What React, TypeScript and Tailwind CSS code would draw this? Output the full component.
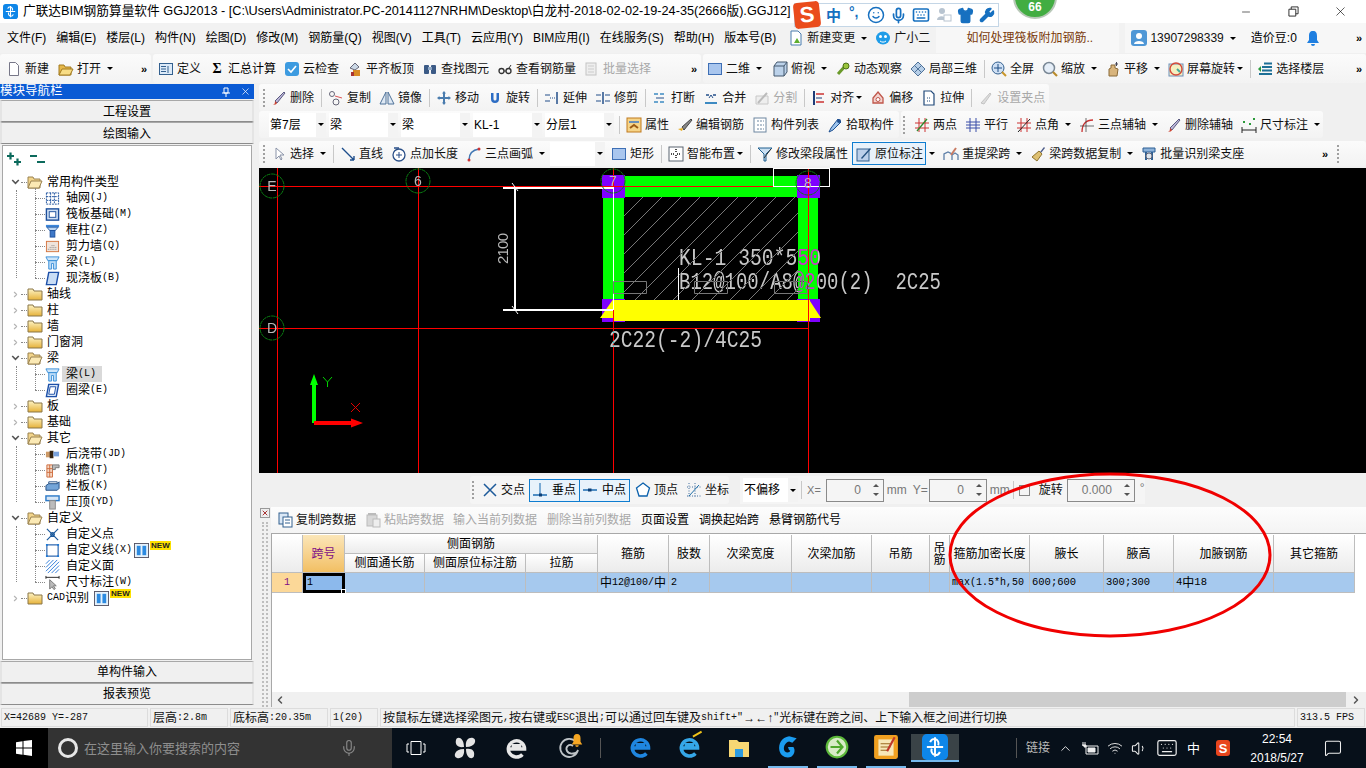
import React from "react";
import { ChevronLeft, ChevronRight, ChevronUp, Keyboard, MessageSquare, Mic, Minus, Shirt, Smile, Volume1, Wifi, Wrench, X } from "lucide-react";

const Svg = ({ children, s = 16 }: { children: React.ReactNode; s?: number }) => (
  <svg viewBox="0 0 16 16" width={s} height={s} className="shrink-0">
    {children}
  </svg>
);

const Logo = ({ s = 14 }: { s?: number }) => (
  <Svg s={s}>
    <rect width="16" height="16" rx="3" fill="#0e86e8" />
    <path d="M8 2v12M3 8h10M5 5a3 3 0 0 1 3-2 3 3 0 0 1 2 4M11 11a3 3 0 0 1-3 2 3 3 0 0 1-2-4" stroke="#fff" strokeWidth="1.2" fill="none" />
  </Svg>
);

const icons: Record<string, React.ReactNode> = {
  doc: <path d="M3.5 1.5h6l3 3v10h-9z" fill="#fff" stroke="#778" />,
  open: <><path d="M1 14V4h5l1 2h6v8z" fill="#e6b84a" stroke="#a27a20" /><path d="M1 14l3-6h11l-3 6z" fill="#f8dd86" stroke="#a27a20" /></>,
  define: <><rect x="1.5" y="2.5" width="13" height="11" fill="#dceaf8" stroke="#33608f" /><path d="M3 5.5h5M3 8h5M3 10.5h5M10 5v7" stroke="#33608f" /></>,
  cloud: <><rect x="1" y="1" width="14" height="14" rx="3" fill="#3d9be0" /><path d="M4 8l3 3 5-6" stroke="#fff" strokeWidth="1.6" fill="none" /></>,
  level: <><path d="M3 7l5-5 4 4-4 3z" fill="#cbd8e6" stroke="#667" /><rect x="6" y="9" width="7" height="6" fill="#d98a24" /><rect x="4" y="11" width="3" height="4" fill="#a33" /></>,
  find: <><rect x="2" y="4" width="5" height="9" rx="1" fill="#3b5a86" /><rect x="9" y="4" width="5" height="9" rx="1" fill="#3b5a86" /><rect x="6" y="6" width="4" height="3" fill="#8fa8c6" /></>,
  glasses: <><circle cx="4.5" cy="10" r="2.5" fill="none" stroke="#333" strokeWidth="1.3" /><circle cx="11.5" cy="10" r="2.5" fill="none" stroke="#333" strokeWidth="1.3" /><path d="M7 10h2M12 7l2-3" stroke="#333" /></>,
  batch: <><rect x="2" y="2" width="10" height="12" fill="#eee" stroke="#c4c4c4" /><path d="M4 5h6M4 8h6M4 11h6" stroke="#ccc" /></>,
  square: <rect x="1.5" y="2.5" width="13" height="11" fill="#a9c6ee" stroke="#3e6fb5" />,
  cube: <><path d="M5 1h10v10l-3 4H2V5z" fill="#bcd2ea" stroke="#44586e" /><path d="M2 5h10v10M12 5l3-4" stroke="#44586e" fill="none" /></>,
  orbit: <><path d="M3 13L12 3" stroke="#6a9a2a" strokeWidth="3" /><circle cx="11" cy="5" r="3" fill="#9ac53c" stroke="#4d701a" /></>,
  local: <><path d="M8 1l7 7-7 7-7-7z" fill="#b7cfe8" stroke="#4f7299" /><path d="M4 4l8 8M12 4l-8 8" stroke="#4f7299" /></>,
  full: <><circle cx="7" cy="7" r="6" fill="#cfe0f4" stroke="#33608f" /><path d="M7 3v8M3 7h8" stroke="#1f4f85" /><path d="M11 11l4 4" stroke="#c9962a" strokeWidth="2" /></>,
  zoom: <><circle cx="7" cy="7" r="5.5" fill="#e5eef8" stroke="#7a8896" strokeWidth="1.5" /><path d="M11 11l4 4" stroke="#b98a2a" strokeWidth="2.2" /></>,
  hand: <><path d="M4 15V8l2-1V4h4v3l3 1-1 7z" fill="#d8b47c" stroke="#8a6a38" /><path d="M10 3h3M11.500 1v4" stroke="#445" /></>,
  screen: <><rect x="1" y="3" width="14" height="12" fill="#f5efc0" stroke="#6c8fbc" /><circle cx="8" cy="8" r="6" fill="none" stroke="#d54a3a" strokeWidth="1.4" /><path d="M9 8l3 3" stroke="#4a9" strokeWidth="2" /></>,
  floors: <><path d="M2 13h13M5 9.500h10M5 6h10M7 2.500h8" stroke="#1d6f96" strokeWidth="2" /><path d="M1 8l3-3v6z" fill="#2a9a3a" /></>,
  brush: <><path d="M4 11l9-9 1 1-8 10z" fill="#bcb6d8" stroke="#5a5a80" /><path d="M1 15c2 0 3-1 3-4l2 2c0 1-2 2-5 2z" fill="#c43" /></>,
  copy: <><circle cx="4" cy="4" r="2.500" fill="none" stroke="#667" /><circle cx="8" cy="12" r="3" fill="none" stroke="#667" /><path d="M7 6l7 2" stroke="#d55" /></>,
  mirror: <><path d="M7 2v12H1zM9 2v12h6z" fill="#dfe9f4" stroke="#4f7299" /></>,
  move: <path d="M8 1l2 2.500H9V7h3.500V6L15 8l-2.500 2V9H9v3.500h1L8 15l-2-2.500h1V9H3.500v1L1 8l2.500-2v1H7V3.500H6z" fill="#4a7cae" />,
  rotate: <path d="M4 3v6a4 4 0 0 0 8 0V3h-2.500v6a1.500 1.500 0 0 1-3 0V3z" fill="#2d6dc4" />,
  extend: <><path d="M13 2v12" stroke="#234f8a" strokeWidth="1.500" /><path d="M1 5h5M1 11h5" stroke="#234f8a" /><path d="M6 8h5" stroke="#234f8a" strokeDasharray="1 1" /></>,
  trim: <><path d="M8 2v12" stroke="#234f8a" strokeWidth="1.500" /><path d="M1 5h5M1 11h5M10 5h5M10 11h5" stroke="#234f8a" /></>,
  breakL: <><path d="M2 4h12M2 12h12" stroke="#3d8ac2" strokeWidth="1.500" strokeDasharray="4 2" /><path d="M4 8h8" stroke="#234f8a" /></>,
  merge: <><path d="M2 13h12" stroke="#3d8ac2" strokeWidth="2" /><path d="M3 5h3M10 5h3" stroke="#234f8a" strokeWidth="1.500" /><path d="M6 8l2-3 2 3" stroke="#234f8a" fill="none" /></>,
  split: <><path d="M2 6h12v8H2z" fill="#eee" stroke="#c8c8c8" /><path d="M4 13L13 3" stroke="#bbb" strokeWidth="2" /></>,
  align: <><path d="M3 1v14" stroke="#1e3c78" strokeWidth="2" /><path d="M5 4h8M5 12h8" stroke="#c33" strokeWidth="1.500" /><path d="M5 8h6" stroke="#1e3c78" /></>,
  offset: <><path d="M8 2l5 6v5H3V8z" fill="#f2d3cf" stroke="#c0564a" strokeWidth="1.300" /><circle cx="8" cy="9.500" r="2" fill="#fff" stroke="#c0564a" /></>,
  stretch: <><path d="M3 1h7l3 3v11H3z" fill="#fff" stroke="#224a7a" strokeWidth="1.200" /><path d="M6 8h4M6 11h4" stroke="#224a7a" strokeDasharray="1 1" /></>,
  grip: <path d="M3 13l9-10 1 1-7 10z" fill="#ddd" stroke="#c4c4c4" />,
  attr: <><rect x="1" y="1" width="14" height="14" fill="#f6d488" stroke="#c07a1f" /><path d="M3 5h10" stroke="#6a8fb8" strokeWidth="2" /><path d="M4 11l4-3 4 3" stroke="#9b5a14" strokeWidth="2" fill="none" /></>,
  edit: <><path d="M5 10l9-8 1 1-8 10z" fill="#888" stroke="#444" /><path d="M1 12l5-1-1 3z" fill="#e4a91c" /></>,
  list: <><rect x="2" y="1" width="12" height="14" fill="#fff" stroke="#6c86a0" /><path d="M5 4h7M5 8h7M5 12h7" stroke="#6c86a0" strokeDasharray="2 1" /></>,
  picker: <><path d="M11 2l3 3-8 8-4 2 2-4z" fill="#9cc4ee" stroke="#1e4f90" /><circle cx="12" cy="4" r="2" fill="#1e4f90" /></>,
  twoPt: <><path d="M1 6h14M1 11h14" stroke="#c33" /><path d="M5 1v14M11 1v14" stroke="#c33" /><path d="M3 14L13 2" stroke="#2e8b2e" strokeWidth="1.300" /></>,
  parallel: <path d="M1 5h14M1 8h14M1 11h14M5 1v14M11 1v14" stroke="#3a4fa8" />,
  angle: <><path d="M1 6h14M1 11h14M5 1v14M11 1v14" stroke="#c33" /><path d="M2 15L14 2" stroke="#222" /></>,
  arc3: <><path d="M3 15C3 7 7 3 14 3" stroke="#c33" strokeWidth="1.300" fill="none" /><path d="M1 9h14M7 1v14" stroke="#333" strokeWidth=".7" /></>,
  dims: <><path d="M1 13h14M1 10v6M15 10v6" stroke="#222" /><rect x="2" y="4" width="2" height="2" fill="#2a9a3a" /><rect x="12" y="1" width="2" height="2" fill="#2a9a3a" /><rect x="8" y="6" width="2" height="2" fill="#2a9a3a" /></>,
  select: <path d="M5 2v11l3-3 2 4 1-1-2-4h4z" fill="#fff" stroke="#8a93a8" />,
  lineT: <path d="M2 2l12 12M14 14v-4M14 14h-4" stroke="#1d4d8c" strokeWidth="1.400" fill="none" />,
  addLen: <><circle cx="8" cy="9" r="6" fill="#fff" stroke="#2a4f88" strokeWidth="1.300" /><path d="M8 6v6M5 9h6" stroke="#2a4f88" /><path d="M3 2h5" stroke="#2a4f88" strokeWidth="1.500" /></>,
  arc: <><path d="M3 14C3 8 6 4 13 3" stroke="#4277b4" strokeWidth="1.500" fill="none" /><circle cx="3" cy="14" r="1.500" fill="#c33" /><circle cx="13" cy="3" r="1.500" fill="#c33" /></>,
  smart: <><rect x="1" y="1" width="14" height="14" fill="#fff" stroke="#5a6470" /><path d="M8 3v4M8 9v4M3 8h4M9 8h4" stroke="#111" strokeDasharray="1 1" strokeWidth="1.500" /></>,
  modify: <><path d="M1 2h14l-6 6v7H7V8z" fill="#cbe0f2" stroke="#1e5e8e" /><path d="M7 12l7-9" stroke="#333" /></>,
  mark: <><rect x="1" y="3" width="12" height="12" fill="#bcd0ea" stroke="#33608f" /><path d="M5 12l9-10 1 1-9 10z" fill="#24507f" /></>,
  lift: <><path d="M1 14V8l4-2 4 2v6M9 14V9l3-2 3 2v5" stroke="#5d7fa8" strokeWidth="1.300" fill="none" /><path d="M8 9l5-7" stroke="#c97b63" strokeWidth="2" /></>,
  broom: <><path d="M10 6l4-5 1 1-4 5z" fill="#4d5c88" /><path d="M2 11l7-6 3 3-5 7z" fill="#dec071" stroke="#8f7430" /></>,
  scan: <><path d="M2 2h12v4H2z" fill="#8db2d9" stroke="#2c5f94" /><path d="M5 6v8M11 6v8" stroke="#2c5f94" strokeWidth="2" /><circle cx="8" cy="10" r="3" fill="#dde6ee" stroke="#667" /></>,
  cross: <path d="M2 2l12 12M14 2L2 14" stroke="#1d5a9a" strokeWidth="1.500" />,
  perp: <><path d="M1 13h14" stroke="#0d62ad" strokeWidth="1.400" /><path d="M8 1v12" stroke="#0d62ad" /><rect x="7" y="11.500" width="3" height="3" fill="#0d3f76" /></>,
  mid: <><path d="M1 8h14" stroke="#0d62ad" strokeWidth="1.400" /><rect x="6" y="6.500" width="3.500" height="3" fill="#0d3f76" /></>,
  top: <path d="M8 1l6.500 5-2.500 8H4L1.500 6z" fill="#fff" stroke="#0d62ad" strokeWidth="1.300" />,
  coord: <><path d="M1 14h14M3 1v14M9 1v14M1 5h14" stroke="#4570a0" strokeDasharray="1 1.500" /><path d="M3 14L13 3" stroke="#1f6fa8" /></>,
  pasteG: <><rect x="3" y="1" width="8" height="3" fill="#bbb" /><rect x="2" y="3" width="10" height="11" fill="#d8d8d8" stroke="#bbb" /><rect x="8" y="7" width="7" height="8" fill="#eee" stroke="#bbb" /></>,
  copyP: <><rect x="2" y="1" width="9" height="11" fill="#dbe8f6" stroke="#33608f" /><rect x="6" y="5" width="9" height="10" fill="#fff" stroke="#33608f" /><path d="M8 8h5M8 11h5" stroke="#33608f" /></>,
  folderDoc: <><path d="M3 1h7l3 3v11H3z" fill="#fff" stroke="#4a7cae" /><path d="M6 13l3-5 3 5z" fill="#5fae2e" /></>,
  gxe: <><ellipse cx="8" cy="8" rx="7" ry="6.500" fill="#1e9ce8" /><circle cx="5.500" cy="6.500" r="1.500" fill="#fff" /><circle cx="10.500" cy="6.500" r="1.500" fill="#fff" /><path d="M5 11c2 1.500 4 1.500 6 0" stroke="#fff" fill="none" /></>,
  user: <><rect x="0" y="0" width="16" height="16" rx="3" fill="#4f97d6" /><circle cx="8" cy="6" r="3" fill="#fff" /><path d="M3 14c0-4 10-4 10 0z" fill="#fff" /></>,
  bell: <path d="M8 1c3 0 4 2 4 5v4l2 3H2l2-3V6c0-3 1-5 4-5zM6 14h4a2 2 0 0 1-4 0z" fill="#1f7fe0" />,
  gridT: <path d="M1.500 2h13v12h-13zM1.500 6h13M1.500 10h13M6 2v12M10 2v12" stroke="#1c4f9c" fill="#fff" strokeDasharray="2 1" />,
  raft: <><rect x="1.500" y="2" width="13" height="12" fill="#cfe0f4" stroke="#1c4f9c" strokeWidth="1.500" /><rect x="4.500" y="5" width="7" height="6" fill="#fff" stroke="#1c4f9c" /></>,
  col: <><path d="M1 2h14v2.500H1z" fill="#3d86d8" /><path d="M2 4.500h12L11 8H5z" fill="#bcd6f2" stroke="#2a5fa8" /><rect x="5.500" y="8" width="5" height="7" fill="#3d78c8" stroke="#1c4f9c" /></>,
  wall: <><rect x="1.500" y="2.500" width="13" height="11" fill="#efe4dc" stroke="#d4753f" /><path d="M3 11h10M5 9h7M7 7h4" stroke="#888" strokeDasharray="1 1" /></>,
  beam: <><path d="M1 2h14l-2 4H3z" fill="#cfe6fa" stroke="#3a8fd8" /><path d="M4 6h8v9H9V9H7v6H4z" fill="#bcdcf8" stroke="#3a8fd8" /></>,
  slab: <path d="M4 1.500h10.500L12 14.500H1.500z" fill="#c9ddf5" stroke="#1c4fa8" strokeWidth="1.500" />,
  ring: <><path d="M4 1.500h10.500L12 14.500H1.500z" fill="#d7e6f7" stroke="#1c4fa8" strokeWidth="1.500" /><path d="M5.500 4h6L10 12H4z" fill="#fff" stroke="#1c4fa8" /></>,
  post: <><path d="M1 5h7v6H1z" fill="#c96" /><path d="M5 4h4v8H5z" fill="#321" /><path d="M9 5h6v5H9z" fill="#7aa2dc" /></>,
  eave: <><path d="M2 2h6v13H2z" fill="#f4d7c3" stroke="#cf6d3e" /><path d="M8 2h7v3h-4v2H8z" fill="#bbb" stroke="#777" /><path d="M2 6h6M2 10h6M5 2v13" stroke="#cf6d3e" /></>,
  rail: <><path d="M1 7l3-2h9l2-2v7l-2 2H1z" fill="#74a5d8" stroke="#224f84" /><path d="M4 5V3h9v2" fill="none" stroke="#224f84" /></>,
  press: <><rect x="1" y="1" width="14" height="5" fill="#d7e6f5" stroke="#2c7ac8" strokeWidth="1.500" /><rect x="5" y="6" width="6" height="9" fill="#bbb" stroke="#888" /></>,
  defPt: <path d="M2 2l12 12M14 2L2 14M6 8a2 2 0 1 0 4 0 2 2 0 1 0-4 0" stroke="#1c5a9c" strokeWidth="1.300" fill="#fff" />,
  defLn: <><rect x="2" y="2" width="12" height="12" fill="#fff" stroke="#1c5aa8" strokeWidth="1.200" /><path d="M1 1h2v2H1zM13 1h2v2h-2zM1 13h2v2H1zM13 13h2v2h-2z" fill="#1c7ad8" /></>,
  defFc: <path d="M1 5l4-4M1 9l8-8M1 13l12-12M3 15L15 3M7 15l8-8M11 15l4-4" stroke="#2c7ad8" />,
  dimT: <><path d="M1 1v3M15 1v3M1 2.500h14" stroke="#222" /><path d="M5 5v10l2.500-2.500 2 3 1.500-1-2-3h3z" fill="#bbb" stroke="#777" /></>,
};

const Ic = ({ n, s }: { n: string; s?: number }) => <Svg s={s}>{icons[n]}</Svg>;

const Arrow = ({ className = "" }: { className?: string }) => (
  <span className={"inline-block w-0 h-0 shrink-0 border-x-[3px] border-t-[3px] border-x-transparent border-t-black " + className} />
);

const Tool = ({ n, t, arrow, gray, tight }: { n: string; t: string; arrow?: boolean; gray?: boolean; tight?: boolean }) => (
  <div className={"flex items-center gap-[3px] shrink-0 whitespace-nowrap " + (gray ? "text-[#a8a8a8]" : "text-[#111]")}>
    <Ic n={n} />
    <span>{t}</span>
    {arrow && <Arrow className={tight ? "-ml-px" : "ml-[3px]"} />}
  </div>
);

const Sep = () => <div className="w-px h-[18px] bg-[#c8c8c8] -ml-px -mr-[2px] shrink-0" />;
const Grip = () => <div className="w-[3px] h-[18px] border-l-[2px] border-dotted border-[#a0a0a0] shrink-0" />;
const More = () => <span className="text-[11px] font-bold leading-none -mt-[8px] shrink-0">»</span>;

const Seg = ({ className = "", children }: { className?: string; children: React.ReactNode }) => (
  <div className={"flex items-center gap-[8px] h-full rounded-[3px] bg-gradient-to-b from-[#fbfbfb] to-[#f3f3f3] " + className}>{children}</div>
);

const Combo = ({ t, w }: { t: string; w: string }) => (
  <div className={"flex items-center h-[24px] bg-white pl-[1px] shrink-0 " + w}>
    <span>{t}</span>
    <span className="ml-auto h-full w-[10px] bg-[#f3f3f3] flex items-center justify-center">
      <Arrow />
    </span>
  </div>
);

// SimSun-like text: half-width latin in a smaller mono font
const Sim = ({ t }: { t: string }) => (
  <>
    {t.split(/([\x00-\x7f]+)/).map((p, i) =>
      /^[\x00-\x7f]+$/.test(p) ? (
        <span key={i} className="font-['Liberation_Mono',monospace] text-[10px]">
          {p}
        </span>
      ) : (
        <span key={i}>{p}</span>
      )
    )}
  </>
);

const Folder = ({ open }: { open?: boolean }) => (
  <Svg>
    {open ? (
      <>
        <path d="M1 14V3h5l1 2h6v9z" fill="#f2d48a" stroke="#9a8250" />
        <path d="M1 14l3-7h11l-3 7z" fill="#fbe9b4" stroke="#9a8250" />
      </>
    ) : (
      <path d="M1 3h5l1 2h8v9H1z" fill="url(#fold)" stroke="#8a7648" />
    )}
  </Svg>
);

const NewMark = ({ className = "" }: { className?: string }) => (
  <span className={"flex items-center " + className}>
    <Svg s={15}>
      <rect x=".5" y=".5" width="15" height="15" fill="#e6f2fc" stroke="#556" />
      <rect x="3" y="3" width="4" height="10" fill="#2c8ae0" />
      <rect x="9" y="3" width="4" height="10" fill="#2c8ae0" />
    </Svg>
    <span className="bg-[#ffe100] text-[#222] font-['Liberation_Sans',sans-serif] font-bold text-[8px] leading-[9px] px-px -mt-[9px] ml-[1px]">NEW</span>
  </span>
);

type Node = { t: string; open?: boolean; badge?: boolean; kids?: { n: string; t: string; sel?: boolean; badge?: boolean }[] };

const tree: Node[] = [
  {
    t: "常用构件类型",
    open: true,
    kids: [
      { n: "gridT", t: "轴网(J)" },
      { n: "raft", t: "筏板基础(M)" },
      { n: "col", t: "框柱(Z)" },
      { n: "wall", t: "剪力墙(Q)" },
      { n: "beam", t: "梁(L)" },
      { n: "slab", t: "现浇板(B)" },
    ],
  },
  { t: "轴线" },
  { t: "柱" },
  { t: "墙" },
  { t: "门窗洞" },
  {
    t: "梁",
    open: true,
    kids: [
      { n: "beam", t: "梁(L)", sel: true },
      { n: "ring", t: "圈梁(E)" },
    ],
  },
  { t: "板" },
  { t: "基础" },
  {
    t: "其它",
    open: true,
    kids: [
      { n: "post", t: "后浇带(JD)" },
      { n: "eave", t: "挑檐(T)" },
      { n: "rail", t: "栏板(K)" },
      { n: "press", t: "压顶(YD)" },
    ],
  },
  {
    t: "自定义",
    open: true,
    kids: [
      { n: "defPt", t: "自定义点" },
      { n: "defLn", t: "自定义线(X)", badge: true },
      { n: "defFc", t: "自定义面" },
      { n: "dimT", t: "尺寸标注(W)" },
    ],
  },
  { t: "CAD识别", badge: true },
];

const ChevronDownMini = () => (
  <svg width="11" height="8" viewBox="0 0 11 8">
    <path d="M1.500 1.500l4 4 4-4" stroke="#555" strokeWidth="2" fill="none" />
  </svg>
);

const TreeView = () => (
  <div className="flex-1 mx-[2px] border border-[#a8a8a8] bg-white text-[12px] leading-none flex flex-col">
    <svg width="0" height="0" className="absolute">
      <defs>
        <linearGradient id="fold" x1="0" y1="0" x2="0" y2="1">
          <stop offset="0" stopColor="#fdf3c4" />
          <stop offset="1" stopColor="#e6b23a" />
        </linearGradient>
      </defs>
    </svg>
    <div className="h-[28px] pl-[3px] pt-[5px] shrink-0">
      <svg width="40" height="16" viewBox="0 0 40 16" className="block">
        <path d="M1 5h7M4.500 1.500v7M8 11h7M11.500 7.500v7M24 5h7M31 11h8" stroke="#0c6a5c" strokeWidth="2.200" fill="none" />
      </svg>
    </div>
    {tree.map((r) => (
      <div key={r.t} className="relative">
        <div className="flex items-center h-[16px] pl-[8px]">
          <span className="w-[9px] flex justify-center">
            {r.open ? <ChevronDownMini /> : <ChevronRight size={11} strokeWidth={3} color="#b4b4b4" />}
          </span>
          <span className="w-[6px] border-t border-dotted border-[#888] ml-[1px]" />
          <Folder open={r.open} />
          <span className="ml-[4px] flex items-center">
            <Sim t={r.t} />
          </span>
          {r.badge && <NewMark className="ml-[5px]" />}
        </div>
        {r.kids && (
          <div className="relative">
            <span className="absolute left-[13px] top-0 bottom-[8px] border-l border-dotted border-[#888]" />
            <span className="absolute left-[32px] -top-[2px] bottom-[8px] border-l border-dotted border-[#888]" />
            {r.kids.map((k) => (
              <div key={k.t} className="flex items-center h-[16px] pl-[32px]">
                <span className="w-[10px] border-t border-dotted border-[#888]" />
                <Ic n={k.n} s={15} />
                <span className={"ml-[2px] pl-[4px] pr-[6px] h-[16px] flex items-center " + (k.sel ? "bg-[#d9d9d9]" : "")}>
                  <Sim t={k.t} />
                </span>
                {k.badge && <NewMark className="-ml-[4px]" />}
              </div>
            ))}
          </div>
        )}
      </div>
    ))}
  </div>
);

const NavButton = ({ t, className = "" }: { t: string; className?: string }) => (
  <div className={"flex items-center justify-center h-[22px] bg-[#f0f0f0] border-y border-x-[2px] border-t-[#a8a8a8] border-b-[#8c8c8c] border-x-[#e4e4e4] text-[12px] leading-none " + className}>{t}</div>
);

const Canvas = () => (
  <div className="h-[305px] bg-black overflow-hidden">
    <svg viewBox="259 168 1107 305" className="block w-full h-full isolate">
      <defs>
        <pattern id="hatch" width="19" height="19" patternUnits="userSpaceOnUse" patternTransform="translate(3 1)">
          <path d="M0 19L19 0" stroke="#c8c8c8" strokeWidth=".6" />
        </pattern>
      </defs>
      <rect x="259" y="168" width="1107" height="305" fill="#000" />
      <rect x="624" y="197" width="174" height="103" fill="url(#hatch)" />
      <path d="M603 176h217v21H624v103h-21zM798 197h20v103h-20z" fill="#00ff00" />
      <path d="M602 175h23v23h-23zM797 175h23v23h-23zM602 299h23v23h-23zM797 299h23v23h-23z" fill="#7f00ff" />
      <path d="M614 298L600 318h14zM808 298l13 20h-13z" fill="#ffff00" />
      <rect x="613" y="300" width="197" height="21" fill="#ffff00" />
      <g shapeRendering="crispEdges">
        <path d="M259 186.500H808M259 328.500H808M277.500 168V473M418.500 168V473M613.500 168V473M808.500 168V473" stroke="#ff0000" strokeWidth="1" fill="none" />
        <path d="M503 187.500H613M773.500 168V186.500H829M829.500 168V187M773 168.500h56M503 310.500H613M613.500 187V310M515.500 187V310M678.500 268V300" stroke="#ffffff" strokeWidth="1" fill="none" />
        <path d="M503 188.500H613M503 309.500H613M514.500 187V310" stroke="#ffffff" strokeWidth="1" fill="none" />
      </g>
      <path d="M512 183l6 8M512 306l6 8" stroke="#fff" fill="none" />
      <path d="M613.500 281.500h33v12h-33zM694.500 281.500h33v12h-33zM774.500 281.500h33v12h-33z" fill="none" stroke="#777" />
      {[
        ["E", 272, 186],
        ["6", 418, 181],
        ["7", 613, 181],
        ["8", 808, 183],
        ["D", 272, 328],
      ].map(([t, x, y]) => (
        <g key={String(t)}>
          <circle cx={Number(x)} cy={Number(y)} r="12" fill="none" stroke="#0a7d12" strokeWidth="1" strokeDasharray="4 .6" />
          <text x={Number(x)} y={Number(y) + 5} textAnchor="middle" fontSize="14" fill="#b9b9b9" className="font-['Liberation_Sans',sans-serif]">
            {t}
          </text>
        </g>
      ))}
      <text x="508" y="264" transform="rotate(-90 508 264)" fontSize="15" textLength="31" fill="#b8b8b8" className="font-['Liberation_Sans',sans-serif]">
        2100
      </text>
      {/* the CAD text is xor-drawn: it turns purple where it crosses the green beam */}
      <g fill="#c8c8c8" fontSize="23" className="font-['Liberation_Mono',monospace] mix-blend-difference">
        <text x="679" y="265" textLength="142" lengthAdjust="spacingAndGlyphs">
          {"KL-1\u00a0350*550"}
        </text>
        <text x="679" y="289" textLength="262" lengthAdjust="spacingAndGlyphs">
          {"B12@100/A8@200(2)\u00a0\u00a02C25"}
        </text>
        <text x="609" y="347" textLength="153" lengthAdjust="spacingAndGlyphs">
          2C22(-2)/4C25
        </text>
      </g>
      <rect x="312" y="385" width="4" height="38" fill="#00ff00" />
      <path d="M314 374l-4 11h8z" fill="#00ff00" />
      <rect x="314" y="421" width="38" height="4" fill="#ff0000" />
      <path d="M363 423l-12-4.500v9z" fill="#ff0000" />
      <path d="M323 377l4.500 5 4.500-5M327.500 382v5" stroke="#00d000" fill="none" />
      <path d="M351 403l9 9M360 403l-9 9" stroke="#e00000" />
    </svg>
  </div>
);

const Spin = ({ v, w = "w-[58px]" }: { v: string; w?: string }) => (
  <div className={"flex items-center h-[23px] border border-[#8a8a8a] bg-[#f5f5f5] shrink-0 " + w}>
    <span className="flex-1 text-right text-[#777] pr-[8px]">{v}</span>
    <span className="flex flex-col gap-[6px] items-center w-[14px]">
      <span className="w-0 h-0 border-x-[3px] border-b-[3px] border-x-transparent border-b-[#555]" />
      <Arrow className="!border-t-[#555]" />
    </span>
  </div>
);

const SnapBar = () => (
  <div className="h-[34px] flex items-center pl-[211px] bg-[#f0f0f0] text-[12px] leading-none">
    <div className="flex items-center h-[28px] gap-[4px] rounded-[3px] bg-[#f5f5f5] pl-[2px]">
      <Grip />
      <div className="ml-[3px] flex items-center">
        <Tool n="cross" t="交点" />
      </div>
      <div className="flex">
        <div className="flex items-center gap-[4px] w-[51px] h-[23px] pl-[2px] border border-[#0f7dd0] bg-[#e8f2fb]">
          <Ic n="perp" />
          <span>垂点</span>
        </div>
        <div className="flex items-center gap-[4px] w-[51px] h-[23px] pl-[2px] -ml-px border border-[#0f7dd0] bg-[#e8f2fb]">
          <Ic n="mid" />
          <span>中点</span>
        </div>
      </div>
      <div className="flex items-center gap-[8px] ml-[1px]">
        <Tool n="top" t="顶点" />
        <Tool n="coord" t="坐标" />
      </div>
    </div>
    <div className="flex items-center h-[28px] ml-[11px] pl-[3px] gap-[3px] text-[#777] bg-[#f5f5f5]">
      <div className="text-black">
        <Combo t="不偏移" w="w-[55px]" />
      </div>
      <span className="w-px h-[18px] bg-[#c8c8c8]" />
      <span className="text-[11px] ml-[2px] mr-[2px] font-['Liberation_Sans',sans-serif]">X=</span>
      <Spin v="0" />
      <span className="font-['Liberation_Sans',sans-serif]">mm</span>
      <span className="ml-[3px] -mr-[2px] font-['Liberation_Sans',sans-serif]">Y=</span>
      <Spin v="0" />
      <span className="font-['Liberation_Sans',sans-serif]">mm</span>
      <span className="w-px h-[18px] bg-[#c8c8c8]" />
      <span className="w-[11px] h-[11px] border border-[#888] ml-[2px]" />
      <span className="text-[#111] ml-[6px] mr-[1px]">旋转</span>
      <Spin v="0.000" w="w-[68px]" />
      <span className="ml-[2px] -mt-[4px]">°</span>
    </div>
  </div>
);

const headCell = "flex items-center justify-center bg-gradient-to-b from-[#fff] to-[#ececec] border-r border-b border-[#bdbdbd] leading-none";
const bodyCell = "flex items-center bg-[#a6c9ee] border-r border-b border-[#bdbdbd] pl-[2px] whitespace-nowrap overflow-hidden";
const cellMono = "font-['Liberation_Mono',monospace] text-[10.500px]";

const heads: [string, string][] = [
  ["箍筋", "row-span-2"],
  ["肢数", "row-span-2"],
  ["次梁宽度", "row-span-2"],
  ["次梁加筋", "row-span-2"],
  ["吊筋", "row-span-2"],
  ["吊筋", "row-span-2 w-[20px] px-[3px] text-center"],
  ["箍筋加密长度", "row-span-2"],
  ["腋长", "row-span-2"],
  ["腋高", "row-span-2"],
  ["加腋钢筋", "row-span-2"],
  ["其它箍筋", "row-span-2"],
];

const GridTable = () => (
  <div className="grid w-fit grid-cols-[31px_42px_80px_101px_72px_71px_41px_82px_80px_58px_20px_80px_74px_70px_100px_81px] grid-rows-[19px_19px_20px] text-[12px] mt-[1px]">
    <div className={headCell + " row-span-2"} />
    <div className="row-span-2 flex items-center justify-center bg-gradient-to-b from-[#fbe6b8] to-[#f2bf62] border-r border-b border-[#bdbdbd] text-[#7d0f86]">跨号</div>
    <div className={headCell + " col-span-3"}>侧面钢筋</div>
    {heads.map(([t, c], i) => (
      <div key={i} className={headCell + " " + c}>
        {t}
      </div>
    ))}
    <div className={headCell}>侧面通长筋</div>
    <div className={headCell}>侧面原位标注筋</div>
    <div className={headCell}>拉筋</div>
    <div className="flex items-center justify-center bg-[#fcd898] border-r border-b border-[#bdbdbd] text-[#7d0f86] font-['Liberation_Mono',monospace] text-[10px]">1</div>
    <div className="relative flex items-center bg-[#8cb9ec] border-[3px] border-black pl-px font-['Liberation_Mono',monospace] text-[10px]">
      1<span className="absolute -right-[4px] -bottom-[4px] w-[5px] h-[5px] bg-black border border-white" />
    </div>
    <div className={bodyCell} />
    <div className={bodyCell} />
    <div className={bodyCell} />
    <div className={bodyCell}>
      <Sim t="中12@100/中" />
    </div>
    <div className={bodyCell}>
      <Sim t="2" />
    </div>
    <div className={bodyCell} />
    <div className={bodyCell} />
    <div className={bodyCell} />
    <div className={bodyCell} />
    <div className={bodyCell}>
      <span className="font-['Liberation_Mono',monospace] text-[10px]">max(1.5*h,50</span>
    </div>
    <div className={bodyCell}>
      <span className={cellMono}>600;600</span>
    </div>
    <div className={bodyCell}>
      <span className={cellMono}>300;300</span>
    </div>
    <div className={bodyCell}>
      <span className={cellMono}>4</span>中<span className={cellMono}>18</span>
    </div>
    <div className={bodyCell} />
  </div>
);

const BottomPane = () => (
  <div className="flex flex-1 min-h-0 text-[12px] leading-none">
    <div className="w-[12px] shrink-0 bg-[#f0f0f0] flex flex-col items-center pt-[1px]">
      <span className="w-[10px] h-[10px] flex items-center justify-center border border-[#999] bg-[#eee]">
        <X size={8} color="#a33" strokeWidth={3} />
      </span>
      <div className="mt-[4px] flex-1 w-[6px] border-x-[2px] border-dotted border-[#bdbdbd]" />
    </div>
    <div className="flex-1 min-w-0 flex flex-col">
      <div className="h-[26px] flex items-center pl-[6px] gap-[9px] bg-gradient-to-b from-[#fdfdfd] to-[#f4f4f4] shrink-0 whitespace-nowrap">
        <Tool n="copyP" t="复制跨数据" />
        <Tool n="pasteG" t="粘贴跨数据" gray />
        <span className="text-[#a8a8a8]">输入当前列数据</span>
        <span className="text-[#a8a8a8] ml-[1px]">删除当前列数据</span>
        <span className="ml-[1px]">页面设置</span>
        <span className="ml-[1px]">调换起始跨</span>
        <span className="ml-[1px]">悬臂钢筋代号</span>
      </div>
      <div className="flex-1 min-h-0 flex flex-col bg-white border-t border-l border-[#a8a8a8]">
        <div className="flex-1 min-h-0">
          <GridTable />
        </div>
        <div className="h-[15px] shrink-0 bg-[#f0f0f0] flex items-center">
          <ChevronLeft size={12} strokeWidth={3} color="#555" className="ml-[2px] shrink-0" />
          <div className="ml-[623px] w-[437px] h-full bg-[#cdcdcd]" />
          <ChevronRight size={12} strokeWidth={3} color="#555" className="ml-[4px] shrink-0" />
        </div>
      </div>
    </div>
  </div>
);

const Cell = ({ w, children }: { w: string; children: React.ReactNode }) => (
  <div className={"h-[19px] flex items-center bg-[#f0f0f0] border border-[#dcdcdc] pl-[2px] overflow-hidden whitespace-nowrap shrink-0 " + w}>{children}</div>
);

const StatusBar = () => (
  <div className="h-[21px] flex items-center gap-[2px] bg-[#f0f0f0] text-[12px] leading-none text-[#111] pl-px">
    <Cell w="w-[147px]">
      <Sim t="X=42689 Y=-287" />
    </Cell>
    <Cell w="w-[78px]">
      <Sim t="层高:2.8m" />
    </Cell>
    <Cell w="w-[98px]">
      <Sim t="底标高:20.35m" />
    </Cell>
    <Cell w="w-[48px]">
      <Sim t="1(20)" />
    </Cell>
    <Cell w="w-[915px]">
      <Sim t={'按鼠标左键选择梁图元,按右键或ESC退出;可以通过回车键及shift+"'} />
      →←↑
      <Sim t={'"光标键在跨之间、上下输入框之间进行切换'} />
    </Cell>
    <Cell w="w-[68px]">
      <Sim t="313.5 FPS" />
    </Cell>
  </div>
);

const AppSlot = ({ children, active, line, w = "w-[40px]" }: { children: React.ReactNode; active?: boolean; line?: boolean; w?: string }) => (
  <div className={"h-full flex items-center justify-center border-b-[2px] shrink-0 " + w + " " + (active ? "border-[#76b9ed] bg-[#3a4347]" : line ? "border-[#76b9ed]" : "border-transparent")}>{children}</div>
);

const IeIcon = ({ c, s = 26 }: { c: string; s?: number }) => (
  <svg viewBox="0 0 24 24" width={s} height={s}>
    <path d="M4 13h15a7.500 7.500 0 1 0-2 5M7 10h9" stroke={c} strokeWidth="3.200" fill="none" />
  </svg>
);

const Taskbar = () => (
  <div className="h-[40px] flex items-center bg-[#07101a] text-white leading-none">
    <div className="w-[48px] h-full bg-black flex items-center justify-center shrink-0">
      <svg viewBox="0 0 16 16" width="16" height="16">
        <path d="M0 2.300l6.500-1V7.500H0zM7.500 1.100L16 0v7.500H7.500zM0 8.500h6.500v6.300L0 13.800zM7.500 8.500H16V16l-8.500-1.200z" fill="#fff" />
      </svg>
    </div>
    <div className="w-[344px] h-full bg-[#333] flex items-center pl-[10px] shrink-0">
      <span className="w-[20px] h-[20px] rounded-full border-[3px] border-[#e6e6e6] shrink-0" />
      <span className="ml-[6px] text-[13px] text-[#8e8e8e]">在这里输入你要搜索的内容</span>
      <Mic size={18} color="#8a8a8a" strokeWidth={1.5} className="ml-[100px]" />
    </div>
    <div className="flex items-center h-full ml-[14px] gap-[27px]">
      <svg viewBox="0 0 20 16" width="20" height="16">
        <path d="M5 1.500h10v13H5zM3 4H1v8h2M17 4h2v8h-2" stroke="#fff" fill="none" />
      </svg>
      <svg viewBox="0 0 24 24" width="24" height="24">
        <path d="M11 11C4 12 2 8 3 4s8-3 8 7zM13 11c-1-7 3-10 7-9s3 9-7 9zM13 13c7-1 9 3 8 7s-8 3-8-7zM11 13c1 7-3 10-7 9s-3-9 7-9z" fill="#e4e4e4" />
      </svg>
      <IeIcon c="#e8e8e8" />
      <div className="relative">
        <svg viewBox="0 0 24 24" width="24" height="24">
          <path d="M19 6a9 9 0 1 0 2 8c-1 4-9 5-11 1s2-8 6-5" stroke="#bfc4c8" strokeWidth="1.800" fill="none" />
        </svg>
        <svg viewBox="0 0 16 16" width="14" height="14" className="absolute -top-[3px] left-[13px]">
          <path d="M8 1c3 0 4 2 4 5v4l2 3H2l2-3V6c0-3 1-5 4-5zM6 14h4a2 2 0 0 1-4 0z" fill="#f5a623" />
        </svg>
      </div>
      <span className="w-px h-[20px] bg-[#555] -ml-[8px]" />
    </div>
    <div className="flex items-center h-full ml-[20px] gap-[9px]">
      <AppSlot>
        <IeIcon c="#1f86e0" />
      </AppSlot>
      <AppSlot>
        <div className="relative">
          <IeIcon c="#35a7e8" />
          <span className="absolute -top-[1px] right-0 w-[10px] h-[5px] border-t-2 border-[#f0c419] rotate-[-30deg]" />
        </div>
      </AppSlot>
      <AppSlot>
        <svg viewBox="0 0 24 24" width="24" height="24">
          <path d="M2 5h8l2 2h10v15H2z" fill="#f7d774" />
          <path d="M8 14h8v8H8z" fill="#2d9be0" />
        </svg>
      </AppSlot>
      <AppSlot line>
        <svg viewBox="0 0 24 24" width="26" height="26">
          <path d="M13 2C6 3 3 9 4 15c1 5 6 8 11 6 3-2 4-6 2-9h-5l1 3h1c0 2-3 3-5 1-2-3 0-8 4-9l3 1 4-4z" fill="#1a9cf0" />
        </svg>
      </AppSlot>
      <AppSlot line>
        <svg viewBox="0 0 24 24" width="26" height="26">
          <circle cx="12" cy="12" r="9.500" fill="#d8ecc8" stroke="#5cb83a" strokeWidth="2" />
          <path d="M6 12h12M12 6l5 6M12 18l5-6" stroke="#4fa82e" strokeWidth="2" fill="none" />
        </svg>
      </AppSlot>
      <AppSlot line>
        <svg viewBox="0 0 24 24" width="26" height="26">
          <rect x="1" y="1" width="22" height="22" rx="2" fill="#f0a020" />
          <rect x="5" y="5" width="14" height="15" fill="#f7e7b8" />
          <path d="M7 9h9M7 12h9M7 15h7" stroke="#9a6a20" />
          <path d="M13 16l7-13" stroke="#c0392b" strokeWidth="2" />
        </svg>
      </AppSlot>
      <div className="-ml-[4px]">
        <AppSlot active w="w-[48px]">
          <Logo s={26} />
        </AppSlot>
      </div>
    </div>
    <span className="w-px h-[20px] bg-[#555] ml-[57px]" />
    <span className="text-[12px] text-[#bbb] ml-[9px]">链接</span>
    <ChevronUp size={15} className="ml-[8px]" color="#e8e8e8" strokeWidth={1.5} />
    <svg viewBox="0 0 18 14" width="18" height="14" className="ml-[8px]">
      <path d="M5 5h12v8H5z" fill="none" stroke="#eee" />
      <path d="M7 7h7v4H7zM2 1v3M4 1v3M1 4h4v2H3" fill="#eee" stroke="#eee" />
    </svg>
    <Wifi size={16} className="ml-[8px]" color="#ddd" strokeWidth={1.5} />
    <Volume1 size={17} className="ml-[8px]" color="#eee" strokeWidth={1.5} />
    <Keyboard size={22} className="ml-[8px]" color="#eee" strokeWidth={1.3} />
    <span className="ml-[9px] text-[13px]">中</span>
    <span className="ml-[16px] w-[14px] h-[16px] bg-[#e8451c] rounded-[3px] flex items-center justify-center text-[13px] font-bold font-['Liberation_Sans',sans-serif]">S</span>
    <div className="ml-[17px] flex flex-col items-center gap-[7px] text-[12px] font-['Liberation_Sans',sans-serif] whitespace-nowrap w-[60px]">
      <span>22:54</span>
      <span>2018/5/27</span>
    </div>
    <MessageSquare size={18} color="#eee" strokeWidth={1.4} className="ml-[17px]" />
  </div>
);

const TitleBar = () => (
  <div className="h-[23px] bg-white flex items-center pl-[3px] text-[12.700px] leading-none whitespace-nowrap overflow-hidden">
    <Logo s={15} />
    <span className="ml-[5px]">广联达BIM钢筋算量软件 GGJ2013 - [C:\Users\Administrator.PC-20141127NRHM\Desktop\白龙村-2018-02-02-19-24-35(2666版).GGJ12]</span>
    <div className="ml-auto flex items-center">
      <Minus size={12} strokeWidth={1.2} className="mr-[36px]" />
      <svg viewBox="0 0 12 12" width="11" height="11" className="mr-[34px]">
        <path d="M1 3.500h7.500V11H1zM3.500 3.500V1H11v7.500H8.500" fill="none" stroke="#222" />
      </svg>
      <X size={15} strokeWidth={1} className="mr-[18px]" />
    </div>
  </div>
);

const MenuBar = () => (
  <div className="h-[30px] bg-[#f2f2f2] flex items-center text-[12px] leading-none whitespace-nowrap">
    <div className="flex items-center h-full gap-[10px] pl-[7px]">
      {["文件(F)", "编辑(E)", "楼层(L)", "构件(N)", "绘图(D)", "修改(M)", "钢筋量(Q)", "视图(V)", "工具(T)", "云应用(Y)", "BIM应用(I)", "在线服务(S)", "帮助(H)", "版本号(B)"].map((m) => (
        <span key={m}>{m}</span>
      ))}
    </div>
    <div className="ml-[12px] flex items-center gap-[8px]">
      <Tool n="folderDoc" t="新建变更" arrow />
      <Tool n="gxe" t="广小二" />
    </div>
    <div className="ml-[6px] w-[183px] h-full bg-[#f7f7f7] flex items-center pl-[30px] text-[#7a3a0a]">如何处理筏板附加钢筋..</div>
    <div className="ml-[6px] flex items-center flex-1 h-full bg-[#f7f7f7] pl-[6px]">
      <Tool n="user" t="13907298339" arrow />
      <span className="ml-[15px]">造价豆:0</span>
      <span className="ml-[8px]">
        <Ic n="bell" />
      </span>
      <span className="ml-auto mr-[4px]">
        <More />
      </span>
    </div>
  </div>
);

const TopToolbar = () => (
  <div className="h-[31px] bg-[#f0f0f0] flex items-center gap-[2px] py-[1px] text-[12px] leading-none">
    <Seg className="w-[151px] pl-[6px] !gap-[9px]">
      <Tool n="doc" t="新建" />
      <Tool n="open" t="打开" arrow />
      <span className="ml-auto mr-[4px]">
        <More />
      </span>
    </Seg>
    <Seg className="w-[548px] pl-[5px]">
      <Tool n="define" t="定义" />
      <div className="flex items-center gap-[3px] whitespace-nowrap">
        <span className="w-[16px] text-center font-bold text-[14px] font-['Liberation_Serif',serif]">Σ</span>
        <span>汇总计算</span>
      </div>
      <Tool n="cloud" t="云检查" />
      <Tool n="level" t="平齐板顶" />
      <Tool n="find" t="查找图元" />
      <Tool n="glasses" t="查看钢筋量" />
      <Tool n="batch" t="批量选择" gray />
      <span className="ml-auto mr-[4px]">
        <More />
      </span>
    </Seg>
    <Seg className="flex-1 pl-[4px]">
      <div className="mr-[2px]">
        <Tool n="square" t="二维" arrow />
      </div>
      <Tool n="cube" t="俯视" arrow />
      <Tool n="orbit" t="动态观察" />
      <Tool n="local" t="局部三维" />
      <Sep />
      <Tool n="full" t="全屏" />
      <Tool n="zoom" t="缩放" arrow />
      <Tool n="hand" t="平移" arrow />
      <Tool n="screen" t="屏幕旋转" arrow tight />
      <Sep />
      <Tool n="floors" t="选择楼层" />
      <span className="ml-auto mr-[4px]">
        <More />
      </span>
    </Seg>
  </div>
);

export default function App() {
  return (
    <div className="relative w-[1366px] h-[768px] overflow-hidden bg-[#f0f0f0] text-black font-['Liberation_Sans','Noto_Sans_CJK_SC',sans-serif]">
      <TitleBar />
      <MenuBar />
      <TopToolbar />
      <div className="flex h-[623px]">
        <div className="w-[254px] shrink-0 flex flex-col pb-[2px]">
          <div className="h-[15px] bg-[#0a5ad4] text-white text-[12.500px] leading-none flex items-center">
            <span>模块导航栏</span>
            <svg viewBox="0 0 10 10" width="10" height="10" className="ml-auto mr-[9px]">
              <path d="M3 1h4v5H3zM1 6h8M5 6v4" stroke="#fff" fill="none" />
            </svg>
            <X size={11} color="#fff" strokeWidth={1.5} className="mr-[3px]" />
          </div>
          <NavButton t="工程设置" className="mt-[1px] pt-[2px]" />
          <NavButton t="绘图输入" className="pt-[2px]" />
          <div className="h-px" />
          <TreeView />
          <NavButton t="单构件输入" className="mt-[1px]" />
          <NavButton t="报表预览" />
        </div>
        <div className="flex-1 min-w-0 flex flex-col pl-[5px] text-[12px] leading-none">
          <div className="h-[27px] shrink-0">
            <Seg className="w-[790px] pl-[4px]">
              <div className="-mr-[3px]">
                <Grip />
              </div>
              <Tool n="brush" t="删除" />
              <Sep />
              <Tool n="copy" t="复制" />
              <Tool n="mirror" t="镜像" />
              <Sep />
              <Tool n="move" t="移动" />
              <Tool n="rotate" t="旋转" />
              <Sep />
              <Tool n="extend" t="延伸" />
              <Tool n="trim" t="修剪" />
              <Sep />
              <Tool n="breakL" t="打断" />
              <Tool n="merge" t="合并" />
              <Tool n="split" t="分割" gray />
              <Sep />
              <Tool n="align" t="对齐" arrow tight />
              <Tool n="offset" t="偏移" />
              <Tool n="stretch" t="拉伸" />
              <Sep />
              <Tool n="grip" t="设置夹点" gray />
            </Seg>
          </div>
          <div className="h-[27px] shrink-0 flex gap-[2px]">
            <Seg className="w-[640px] pl-[10px] !gap-[3px]">
              <Combo t="第7层" w="w-[57px]" />
              <Combo t="梁" w="w-[69px]" />
              <Combo t="梁" w="w-[69px]" />
              <Combo t="KL-1" w="w-[69px]" />
              <Combo t="分层1" w="w-[69px]" />
              <div className="flex items-center gap-[8px] ml-[3px]">
                <Sep />
                <Tool n="attr" t="属性" />
                <Tool n="edit" t="编辑钢筋" />
                <Tool n="list" t="构件列表" />
                <Tool n="picker" t="拾取构件" />
              </div>
            </Seg>
            <Seg className="flex-1 pl-[2px] mr-[43px]">
              <Grip />
              <Tool n="twoPt" t="两点" />
              <Tool n="parallel" t="平行" />
              <Tool n="angle" t="点角" arrow />
              <Tool n="arc3" t="三点辅轴" arrow />
              <Tool n="brush" t="删除辅轴" />
              <Tool n="dims" t="尺寸标注" arrow />
            </Seg>
          </div>
          <div className="h-[26px] shrink-0 mt-[2px] pt-px">
            <Seg>
              <div className="ml-[4px] -mr-[3px]">
                <Grip />
              </div>
              <Tool n="select" t="选择" arrow />
              <Sep />
              <Tool n="lineT" t="直线" />
              <Tool n="addLen" t="点加长度" />
              <Tool n="arc" t="三点画弧" arrow />
              <div className="-ml-[3px] -mr-[2px]">
                <Combo t="" w="w-[55px]" />
              </div>
              <Tool n="square" t="矩形" />
              <Sep />
              <Tool n="smart" t="智能布置" arrow tight />
              <Sep />
              <Tool n="modify" t="修改梁段属性" />
              <div className="flex items-center -ml-[4px]">
                <div className="h-[23px] flex items-center border border-[#0f7dd0] bg-[#e8f2fb] pl-[3px] pr-[2px] -my-[1px]">
                  <Tool n="mark" t="原位标注" />
                </div>
                <Arrow className="ml-[3px]" />
              </div>
              <Tool n="lift" t="重提梁跨" arrow />
              <Tool n="broom" t="梁跨数据复制" arrow />
              <Tool n="scan" t="批量识别梁支座" />
              <span className="ml-auto">
                <More />
              </span>
              <div className="mr-[26px] ml-[1px]">
                <Grip />
              </div>
            </Seg>
          </div>
          <div className="h-[2px] shrink-0" />
          <Canvas />
          <SnapBar />
          <BottomPane />
        </div>
      </div>
      <StatusBar />
      <Taskbar />

      {/* overlays: the hand drawn ellipse, the IME bar and the floating ball */}
      <svg viewBox="0 0 1366 768" width="1366" height="768" className="absolute inset-0 pointer-events-none">
        <ellipse cx="1110" cy="555" rx="160" ry="81" fill="none" stroke="#f00000" strokeWidth="3" />
      </svg>
      <div className="absolute left-[794px] top-[3px] w-[205px] h-[24px] flex items-center bg-white border border-[#c4d6e6] text-[#1670c0]">
        <span className="w-[26px] h-[26px] -ml-px bg-[#ea4c1c] rounded-[4px] flex items-center justify-center text-white font-bold text-[22px] leading-none rotate-[-6deg] font-['Liberation_Sans',sans-serif]">S</span>
        <span className="ml-[6px] font-bold text-[15px] leading-none">中</span>
        <span className="ml-[8px] font-bold text-[14px] leading-none -mt-[6px]">°,</span>
        <Smile size={18} className="ml-[8px]" />
        <Mic size={17} className="ml-[5px]" strokeWidth={2.4} />
        <Keyboard size={18} className="ml-[5px]" strokeWidth={2.2} />
        <svg viewBox="0 0 16 16" width="16" height="16" className="ml-[6px]">
          <circle cx="6" cy="4" r="3" fill="#b8c4d0" />
          <path d="M1 13c0-5 9-5 9 0z" fill="#b8c4d0" />
          <rect x="8" y="8" width="7" height="6" fill="#fff" stroke="#b8c4d0" />
        </svg>
        <Shirt size={17} className="ml-[5px]" fill="#1670c0" />
        <Wrench size={16} className="ml-[5px]" fill="#1670c0" />
      </div>
      <div className="absolute left-[1013px] -top-[25px] w-[44px] h-[44px] rounded-full bg-[#42ad42] border-[2px] border-[#b8c8b8] flex items-end justify-center pb-[4px] text-white font-bold text-[12px] leading-none font-['Liberation_Sans',sans-serif]">66</div>
    </div>
  );
}
